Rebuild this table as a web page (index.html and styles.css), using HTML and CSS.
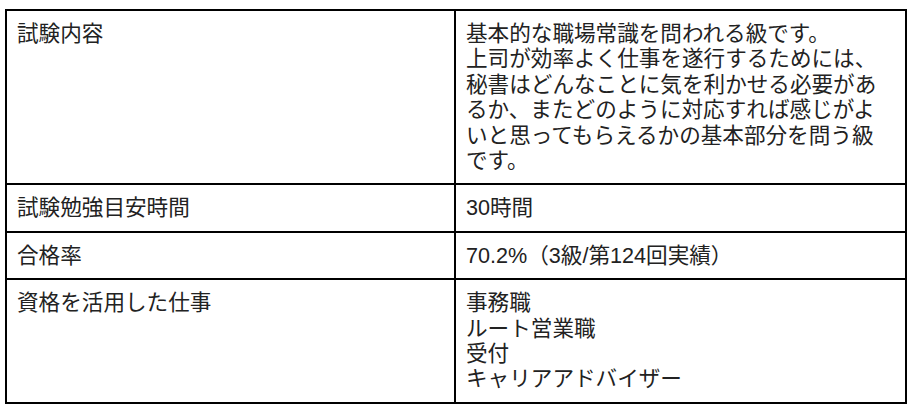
FILE: index.html
```html
<!DOCTYPE html>
<html lang="ja">
<head>
<meta charset="utf-8">
<title>試験概要</title>
<link rel="stylesheet" href="styles.css">
</head>
<body>
<table class="info">
  <tbody>
    <tr>
      <th class="label">試験内容</th>
      <td class="value">基本的な職場常識を問われる級です。<br>上司が効率よく仕事を遂行するためには、秘書はどんなことに気を利かせる必要があるか、またどのように対応すれば感じがよいと思ってもらえるかの基本部分を問う級です。</td>
    </tr>
    <tr>
      <th class="label">試験勉強目安時間</th>
      <td class="value">30時間</td>
    </tr>
    <tr>
      <th class="label">合格率</th>
      <td class="value">70.2%（3級/第124回実績）</td>
    </tr>
    <tr>
      <th class="label">資格を活用した仕事</th>
      <td class="value">事務職<br>ルート営業職<br>受付<br>キャリアアドバイザー</td>
    </tr>
  </tbody>
</table>
</body>
</html>
```

FILE: styles.css
```css
html, body {
  margin: 0;
  padding: 0;
  background: #fff;
}

body {
  font-family: "Liberation Sans", "Noto Sans CJK JP", sans-serif;
  font-size: 21.6px;
  line-height: 25.4px;
  color: #222;
}

.info {
  margin: 9px 0 0 5px;
  width: 902px;
  border-collapse: collapse;
  border: 2px solid #000;
  table-layout: fixed;
}

.info th,
.info td {
  border: 2px solid #000;
  padding: 10px;
  vertical-align: top;
  text-align: left;
  font-weight: normal;
}

.label {
  width: 427px;
}

.value {
  padding-right: 12px;
}
```
